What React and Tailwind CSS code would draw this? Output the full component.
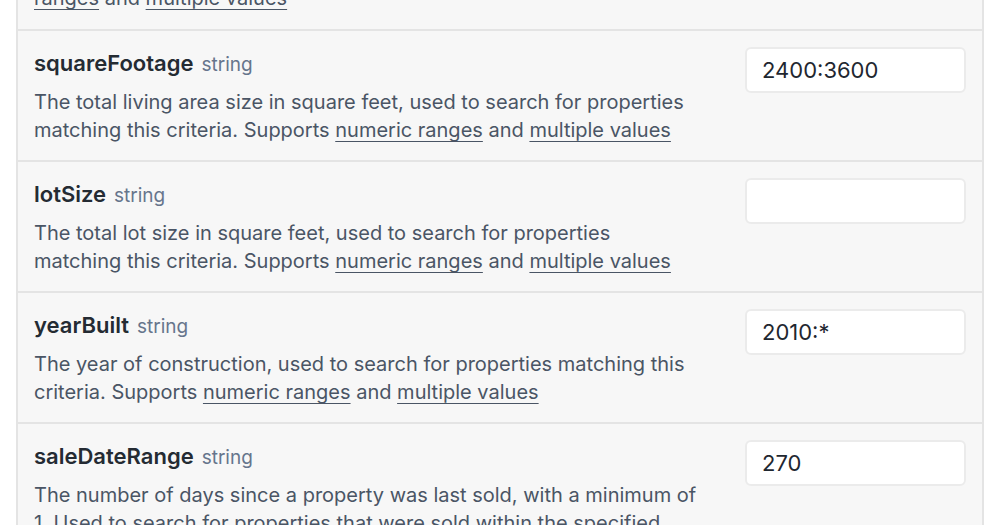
import React from 'react';

const rows = [
  {
    name: 'squareFootage',
    text: 'The total living area size in square feet, used to search for properties matching this criteria. Supports',
    value: '2400:3600',
  },
  {
    name: 'lotSize',
    text: 'The total lot size in square feet, used to search for properties matching this criteria. Supports',
    value: '',
  },
  {
    name: 'yearBuilt',
    text: 'The year of construction, used to search for properties matching this criteria. Supports',
    value: '2010:*',
  },
];

function Links({ lead }) {
  return (
    <>
      {lead}{' '}
      <a href="#" className="underline underline-offset-[4px] decoration-1">numeric ranges</a>{' '}
      and{' '}
      <a href="#" className="underline underline-offset-[4px] decoration-1">multiple values</a>
    </>
  );
}

function Row({ name, children, value }) {
  return (
    <div className="flex gap-8 pt-4 pb-[15px] px-4 border-b-2 border-[#e4e4e4]">
      <div className="flex-1 pr-[14px]">
        <div className="flex items-baseline gap-2 h-8 leading-8">
          <span className="text-[22px] font-semibold text-[#242b33]">{name}</span>
          <span className="text-[19px] text-[#66758c]">string</span>
        </div>
        <p className="mt-[9px] text-[20px] leading-[28.5px] text-[#4a5565]">{children}</p>
      </div>
      <input
        readOnly
        value={value}
        className="w-[221px] h-[46px] shrink-0 rounded-md border-2 border-[#ebebeb] bg-white px-[15px] text-[22px] text-[#1f2730] outline-none"
      />
    </div>
  );
}

export default function App() {
  return (
    <div className="h-[525px] overflow-hidden bg-white" style={{ fontFamily: 'Inter, "Noto Sans", sans-serif' }}>
      <div className="mx-4 -mt-[32px] border-x-2 border-[#e4e4e4] bg-[#f7f7f7]">
        <div className="p-4 border-b-2 border-[#e4e4e4]">
          <p className="text-[20px] leading-[28.5px] text-[#4a5565]">
            <a href="#" className="underline underline-offset-[4px] decoration-1">ranges</a> and{' '}
            <a href="#" className="underline underline-offset-[4px] decoration-1">multiple values</a>
          </p>
        </div>
        {rows.map((r) => (
          <Row key={r.name} name={r.name} value={r.value}>
            <Links lead={r.text} />
          </Row>
        ))}
        <Row name="saleDateRange" value="270">
          The number of days since a property was last sold, with a minimum of 1. Used to search for properties that were sold within the specified date range.
        </Row>
      </div>
    </div>
  );
}
